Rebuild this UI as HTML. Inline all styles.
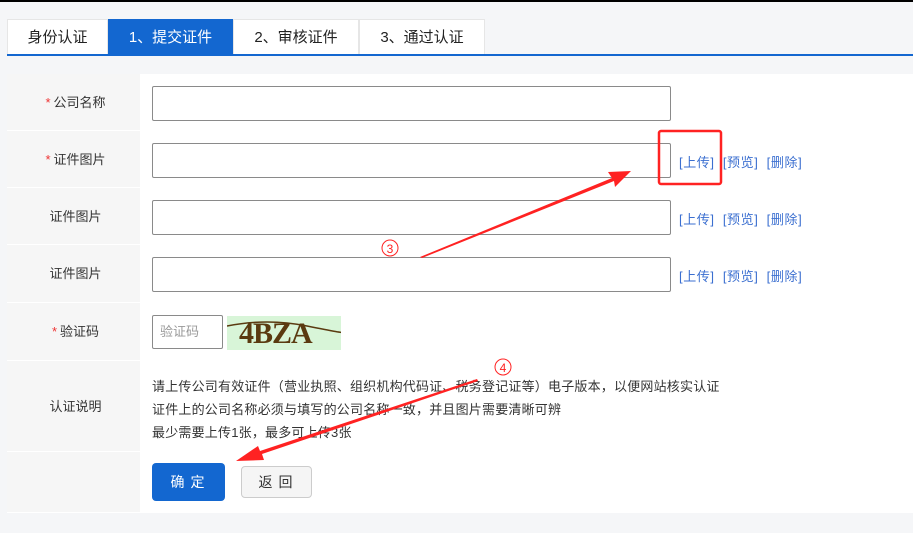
<!DOCTYPE html>
<html><head><meta charset="utf-8"><style>
*{margin:0;padding:0;box-sizing:border-box}
body{width:913px;height:533px;background:#f5f6f8;font-family:"Liberation Sans","Noto Sans CJK SC",sans-serif;position:relative;overflow:hidden;font-size:13px;color:#333}
.top{position:absolute;left:0;top:0;width:913px;height:2px;background:#000}
.tab{position:absolute;top:19px;height:36px;line-height:36px;text-align:center;font-size:15px;background:#fff;border:1px solid #e6e6e6;border-bottom:none;color:#222}
.line{position:absolute;left:7px;top:54px;width:906px;height:2px;background:#1367d0}
.form{position:absolute;left:7px;top:74px;width:906px;height:439px;background:#fff}
.lab{position:absolute;left:7px;width:133px;background:#f6f6f6;border-bottom:1px solid #fff;text-align:center;font-size:13px;color:#333;padding-left:4px}
.lab b{color:#e33;font-weight:normal;margin-right:3px}
.inp{position:absolute;left:152px;width:519px;height:35px;border:1px solid #8a8a8a;border-radius:2px;background:#fff}
.ops{position:absolute;left:679px;font-size:13px;color:#3b6fd0;letter-spacing:0.6px;word-spacing:4px}
.txt{position:absolute;left:152px;font-size:13px;color:#333;letter-spacing:0.2px}
</style></head><body>
<div class="top"></div>
<div class="tab" style="left:7px;width:101px">身份认证</div>
<div class="tab" style="left:108px;width:125px;background:#1367d0;color:#fff;border-color:#1367d0">1、提交证件</div>
<div class="tab" style="left:233px;width:126px">2、审核证件</div>
<div class="tab" style="left:359px;width:126px">3、通过认证</div>
<div class="line"></div>
<div class="form"></div>
<div class="lab" style="top:74px;height:57px;line-height:57px"><b>*</b>公司名称</div>
<div class="lab" style="top:131px;height:57px;line-height:57px"><b>*</b>证件图片</div>
<div class="lab" style="top:188px;height:57px;line-height:57px">证件图片</div>
<div class="lab" style="top:245px;height:58px;line-height:58px">证件图片</div>
<div class="lab" style="top:303px;height:58px;line-height:58px"><b>*</b>验证码</div>
<div class="lab" style="top:361px;height:91px;line-height:91px">认证说明</div>
<div class="lab" style="top:452px;height:61px"></div>
<div class="inp" style="top:86px"></div>
<div class="inp" style="top:143px"></div>
<div class="inp" style="top:200px"></div>
<div class="inp" style="top:257px"></div>
<div class="ops" style="top:152px">[上传] [预览] [删除]</div>
<div class="ops" style="top:209px">[上传] [预览] [删除]</div>
<div class="ops" style="top:266px">[上传] [预览] [删除]</div>
<div class="inp" style="top:315px;width:71px;height:34px;color:#999;line-height:32px;padding-left:7px;font-size:13px">验证码</div>
<div style="position:absolute;left:227px;top:316px;width:114px;height:34px;background:#d8f5d8;overflow:hidden">
<span style="position:absolute;left:12px;top:1px;font-family:'Liberation Serif',serif;font-weight:bold;font-size:30px;color:#5a3a10;letter-spacing:-1px">4BZA</span>
<svg width="114" height="34" style="position:absolute;left:0;top:0"><path d="M0 10 Q40 2 80 10 T114 16" stroke="#5a3a10" stroke-width="1.5" fill="none"/></svg></div>
<div class="txt" style="top:376px">请上传公司有效证件（营业执照、组织机构代码证、税务登记证等）电子版本，以便网站核实认证</div>
<div class="txt" style="top:399px">证件上的公司名称必须与填写的公司名称一致，并且图片需要清晰可辨</div>
<div class="txt" style="top:422px">最少需要上传1张，最多可上传3张</div>
<div style="position:absolute;left:152px;top:463px;width:73px;height:38px;background:#1367d0;border-radius:4px;color:#fff;text-align:center;line-height:38px;font-size:14px;letter-spacing:6px;padding-left:4px">确定</div>
<div style="position:absolute;left:241px;top:466px;width:71px;height:32px;background:#f5f5f5;border:1px solid #ccc;border-radius:4px;text-align:center;line-height:30px;font-size:14px;letter-spacing:6px;padding-left:4px">返回</div>
<svg width="913" height="533" style="position:absolute;left:0;top:0">
<rect x="659" y="131" width="62" height="53" rx="2" fill="none" stroke="#f22" stroke-width="2.5"/>
<polygon points="420,257 612,178 608,172 631,171 615,187 614,181 422,258" fill="#f22"/>
<polygon points="478,381 262,454 264,460 236,461 258,446 260,451 477,379" fill="#f22"/>
<circle cx="390" cy="248" r="8" fill="none" stroke="#f22" stroke-width="1"/>
<text x="390" y="253" font-size="12" fill="#f22" text-anchor="middle" font-family="Liberation Sans">3</text>
<circle cx="503" cy="367" r="8" fill="none" stroke="#f22" stroke-width="1"/>
<text x="503" y="372" font-size="12" fill="#f22" text-anchor="middle" font-family="Liberation Sans">4</text>
</svg>
</body></html>
